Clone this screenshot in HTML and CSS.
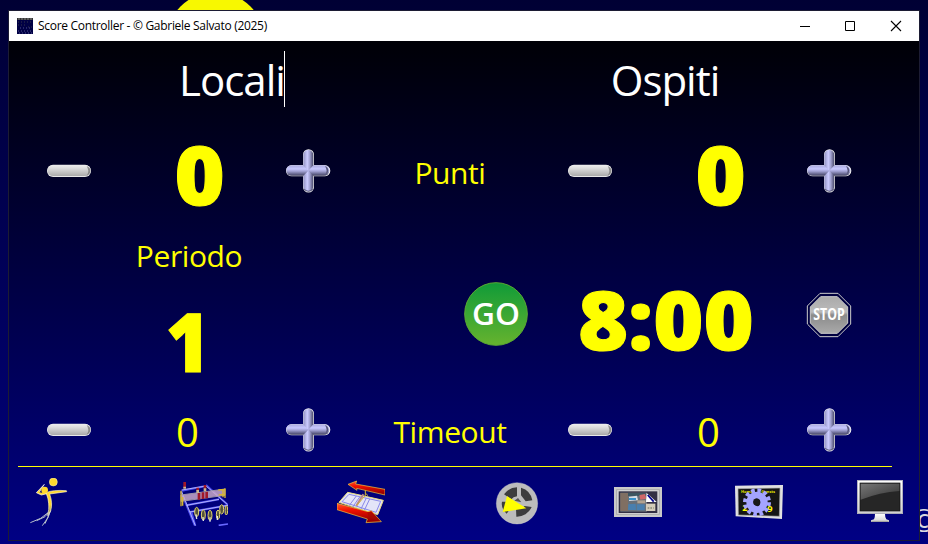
FILE: index.html
```html
<!DOCTYPE html>
<html lang="it">
<head>
<meta charset="utf-8">
<title>Score Controller</title>
<link rel="stylesheet" href="styles.css">
</head>
<body>
<svg class="defs" width="0" height="0" aria-hidden="true">
  <defs>
    <linearGradient id="gm" x1="0" y1="0" x2="0" y2="1"><stop offset="0" stop-color="#eee"/><stop offset=".3" stop-color="#ddd"/><stop offset=".65" stop-color="#c4c4c4"/><stop offset="1" stop-color="#aaa"/></linearGradient>
    <linearGradient id="gh" x1="0" y1="0" x2="0" y2="1"><stop offset="0" stop-color="#aaaade"/><stop offset=".35" stop-color="#c8c8ff"/><stop offset=".6" stop-color="#9c9ccc"/><stop offset="1" stop-color="#404060"/></linearGradient>
    <linearGradient id="gv" x1="0" y1="0" x2="1" y2="0"><stop offset="0" stop-color="#9090c0"/><stop offset=".4" stop-color="#ccccff"/><stop offset=".65" stop-color="#a0a0d0"/><stop offset="1" stop-color="#484868"/></linearGradient>
    <linearGradient id="gg" x1="0" y1="0" x2="0" y2="1"><stop offset="0" stop-color="#109b38"/><stop offset="1" stop-color="#66b32e"/></linearGradient>
    <linearGradient id="gs" x1="0" y1="0" x2="0" y2="1"><stop offset="0" stop-color="#aaa"/><stop offset=".42" stop-color="#bbb"/><stop offset=".5" stop-color="#8b8b8b"/><stop offset="1" stop-color="#aaa"/></linearGradient>
    <linearGradient id="gb" x1="0" y1="0" x2="0" y2="1"><stop offset="0" stop-color="#fff"/><stop offset="1" stop-color="#d0d0d0"/></linearGradient>
    <linearGradient id="gk" x1="0" y1="0" x2="1" y2="1"><stop offset="0" stop-color="#777"/><stop offset="1" stop-color="#333"/></linearGradient>
    <linearGradient id="gr" x1="0" y1="0" x2="0.2" y2="1"><stop offset="0" stop-color="#ff5a30"/><stop offset=".4" stop-color="#f01000"/><stop offset="1" stop-color="#900"/></linearGradient>
    <linearGradient id="gl" x1="0" y1="0" x2="0" y2="1"><stop offset="0" stop-color="#ffd92e"/><stop offset=".55" stop-color="#ffd92e"/><stop offset="1" stop-color="#777b70"/></linearGradient>
    <symbol id="minus" viewBox="45 51 144 144">
      <rect x="51" y="104" width="132" height="37" rx="18" fill="#e8e8e8"/>
      <rect x="53" y="105" width="129" height="33" rx="16.500" fill="url(#gm)"/>
      <path d="M170 108q12 5 11 15q-1 10-11 14q6-8 5-15t-5-14z" fill="#666" opacity=".65"/>
    </symbol>
    <symbol id="plus" viewBox="762 51 144 144">
      <path d="M835 52v8M819 74a16 16 0 0 1 33 0v31h32a17 17 0 0 1 0 34h-32v32a16 16 0 0 1-33 0v-32h-34a17 17 0 0 1 0-34h34z" fill="#eee"/>
      <rect x="769" y="106" width="129" height="31" rx="15.500" fill="url(#gh)"/>
      <path d="M820 75a15 15 0 0 1 30 0v31l-15 16-15-16zM820 137l15-15 15 15v32a15 15 0 0 1-30 0z" fill="url(#gv)"/>
      <path d="M885 108q11 5 10 14t-10 13q5-7 5-13t-5-14zM823 176q12 12 24 0l2 3q-13 12-27 0z" fill="#555578"/>
    </symbol>
  </defs>
</svg>
<div class="desktop">
  <div class="ball"></div>
  <div class="mark">©</div>
  <main class="window">
    <header class="titlebar">
      <svg class="app" viewBox="0 0 16 16"><rect width="16" height="16" fill="#000044"/><path d="M0 0h16v2H0z" fill="#333"/><path d="M1 1h14" stroke="#999" stroke-width=".8" stroke-dasharray="2 1"/><path d="M1 4h14M1 7h9M11 9h4" stroke="#4a4a4a" stroke-width=".7" stroke-dasharray="1 2"/><path d="M1 13h14M2 15h13M3 10h10" stroke="#6262a4" stroke-width=".8" stroke-dasharray="1 2"/></svg>
      <span class="title">Score Controller - © Gabriele Salvato (2025)</span>
      <svg class="controls" viewBox="0 0 104 12"><path d="M1 6.500h10M46.500 1.500h9v9h-9z" fill="none" stroke="#000"/><path d="M92 1l10 10M102 1L92 11" stroke="#000" stroke-width="1.100"/></svg>
    </header>
    <section class="row names">
      <div class="name home"><span>Locali</span><i class="caret"></i></div>
      <div class="name away">Ospiti</div>
    </section>
    <section class="row points">
      <svg class="btn first"><use href="#minus"/></svg>
      <b class="big">0</b>
      <svg class="btn"><use href="#plus"/></svg>
      <span class="label">Punti</span>
      <svg class="btn"><use href="#minus"/></svg>
      <b class="big">0</b>
      <svg class="btn"><use href="#plus"/></svg>
    </section>
    <section class="middle">
      <div class="period"><span class="label">Periodo</span><b class="big one">1</b></div>
      <svg class="go" viewBox="42 36 192 192"><circle cx="138" cy="132" r="94" fill="url(#gg)" stroke="#5aa832" stroke-width="3"/><text x="138" y="165" text-anchor="middle" textLength="144" lengthAdjust="spacingAndGlyphs">GO</text></svg>
      <b class="big clock">8:00</b>
      <svg class="stop" viewBox="1068 66 138 138"><path d="M1110 70h54l38 38v54l-38 38h-54l-38-38v-54z" fill="#000040" stroke="#ccc" stroke-width="3"/><path d="M1112 80h50l31 31v48l-31 31h-50l-31-31v-48z" fill="url(#gs)" stroke="#ccc" stroke-width="3"/><text x="1137" y="150" text-anchor="middle" textLength="94" lengthAdjust="spacingAndGlyphs">STOP</text></svg>
    </section>
    <section class="row timeouts">
      <svg class="btn first"><use href="#minus"/></svg>
      <span class="count">0</span>
      <svg class="btn"><use href="#plus"/></svg>
      <span class="label">Timeout</span>
      <svg class="btn"><use href="#minus"/></svg>
      <span class="count">0</span>
      <svg class="btn"><use href="#plus"/></svg>
    </section>
    <hr class="rule">
    <nav class="toolbar">
      <svg class="tool" viewBox="75 39 144 144">
        <path d="M152 135L144 158 127 182M148 140L122 160 91 173M152 135L135 155 110 167M152 137L135 176" fill="none" stroke="#b8c0cc" stroke-width="3"/>
        <path d="M133 58L109 83 124 90 141 86 130 78 119 80z" fill="#ffd92e" stroke="#fff" stroke-width="2"/><path d="M118 82l8-8 1 9z" fill="#000078"/>
        <path d="M138 83Q159 74 199 77L200 80 149 87Q159 115 152 137Q147 144 143 152Q152 115 138 83z" fill="url(#gl)" stroke="#fff6c8" stroke-width="2"/>
        <circle cx="160" cy="51" r="12" fill="#ffd92e" stroke="#fff4b0" stroke-width="1.500"/><circle cx="134" cy="75" r="10" fill="#ffd92e"/>
      </svg>
      <svg class="tool" viewBox="540 39 144 144">
        <path d="M545 77L618 63M574 140L586 182M543 80L584 180M618 60L684 120M559 121L657 103M570 141L684 121" fill="none" stroke="#4c4cf0" stroke-width="6"/>
        <path d="M545 75L618 63 682 118M545 80L586 182M559 121L657 103M570 141L684 121" fill="none" stroke="#e4e4ff" stroke-width="2"/>
        <path d="M656 181L684 177" stroke="#6868ff" stroke-width="5"/>
        <path d="M543 90L675 72V91L543 109z" fill="#c8a8c8" fill-opacity=".85" stroke="#9c94a8" stroke-width="3"/>
        <path d="M543 77v47M548 96v26M675 70v29M669 74v23M655 75l20-2M656 90l19-2" stroke="#d8b830" stroke-width="4"/>
        <g stroke-width="8"><path d="M554 51v18M593 68v10M615 60v11M597 84v20M609 82v20M620 80v20" stroke="#a01828"/><path d="M554 65v6M593 75v9M615 70v9" stroke="#c8b890"/></g>
        <g fill="#55523a" stroke="#e0d470" stroke-width="3"><ellipse cx="590" cy="141" rx="6" ry="14"/><ellipse cx="610" cy="150" rx="6" ry="15"/><ellipse cx="630" cy="151" rx="6" ry="15"/><ellipse cx="654" cy="149" rx="5" ry="14"/><ellipse cx="665" cy="133" rx="6" ry="14"/><ellipse cx="679" cy="136" rx="4" ry="14"/></g>
        <path d="M588 148l2 14M609 156l1 12M630 157v13M652 153v12" stroke="#e8e8e0" stroke-width="4"/>
      </svg>
      <svg class="tool" viewBox="51 39 144 144">
        <path d="M83 82L190 106 173 149 57 112z" fill="#e4e4f8" stroke="#e8dc80" stroke-width="3"/>
        <path d="M87 88L182 109 168 142 66 110zM109 93L88 121M119 96L98 126M139 99L123 132M149 102L133 136" fill="none" stroke="#8888e8" stroke-width="3"/>
        <path d="M130 88L109 122" stroke="#b88888" stroke-width="6"/><path d="M136 74v17L110 122M136 84l8 8" stroke="#d4b830" stroke-width="3" fill="none"/>
        <path d="M84 58L110 48 107 57 195 73V90L110 70 111 76z" fill="url(#gr)" stroke="#f0d040" stroke-width="2"/>
        <path d="M51 115L144 140 154 137 184 170 138 173 142 162 51 134z" fill="url(#gr)" stroke="#f0d040" stroke-width="2"/><path d="M142 142l12-2 28 28-35-8z" fill="#a00c00" opacity=".65"/>
      </svg>
      <svg class="tool" viewBox="519 39 144 144">
        <circle cx="591" cy="115" r="62" fill="#bcbcbc" stroke="#ddd" stroke-width="1"/>
        <path d="M591 67A48 48 0 0 0 552 88L574 103Q579 96 591 94zM603 68A48 48 0 0 1 637 106L617 109 603 91zM546 110Q542 130 560 146L574 126Q566 119 567 110zM588 131L589 155A48 48 0 0 0 635 126L614 123Q603 134 588 131z" fill="#3d3d3d"/>
        <path d="M583 107l11-8 10 13z" fill="#555"/><path d="M561 93L619 130 548 141z" fill="#ff0"/>
      </svg>
      <svg class="tool" viewBox="42 39 144 144">
        <rect x="42" y="66" width="144" height="90" fill="#c9c9c9"/><rect x="50" y="74" width="128" height="74" fill="#d8d8d8" stroke="#aaa" stroke-width="3"/><rect x="56" y="79" width="116" height="65" fill="#333044"/>
        <path d="M61 83h80v57H61z" fill="#687078"/><path d="M61 84h23v54H61z" fill="#806f62"/><path d="M84 84h53v9H84z" fill="#3d5560"/>
        <path d="M87 95l24-3 3 14-27 2z" fill="#d5dde6"/><path d="M87 99h21v6H87z" fill="#3a91cb"/><path d="M118 90l17-3 4 14-18 3z" fill="#cf6868"/><path d="M85 118l22-2 1 19H84zM110 118h24v18h-24z" fill="#497fae"/><path d="M138 116h28v22h-28z" fill="#d4ccba"/><path d="M143 129h18" stroke="#887" stroke-width="4" stroke-dasharray="5 3"/><path d="M112 106h24v9h-24z" fill="#b1a290"/>
        <path d="M140 84L170 111H138z" fill="#fff"/><path d="M143 90l18 20" stroke="#000090" stroke-width="5"/>
      </svg>
      <svg class="tool" viewBox="405 39 144 144">
        <path d="M405 62L549 60 546 162 407 154z" fill="#e1e1e1"/><path d="M414 71L540 69 538 154 415 150z" fill="#151515" stroke="#aaa" stroke-width="2"/>
        <text class="tiny" x="423" y="84">Home</text><text class="tiny" x="484" y="84">Guests</text><text class="digits" x="427" y="139">2</text><text class="digits" x="502" y="142">9</text>
        <circle cx="471" cy="112" r="33" fill="none" stroke="#a4a4ff" stroke-width="18" stroke-dasharray="10 7.279"/><circle cx="471" cy="112" r="21" fill="none" stroke="#a4a4ff" stroke-width="22"/><path d="M463 103q9-7 16 2 4 12-3 18-9 2-15-5-4-9 2-15z" fill="#181818"/>
      </svg>
      <svg class="tool" viewBox="228 234 144 144">
        <path d="M285 341h30q0 13 4 17l8 3v5h-54v-5l9-3q3-4 3-17z" fill="url(#gb)"/><path d="M274 364h52" stroke="#999" stroke-width="3"/>
        <rect x="232" y="241" width="136" height="100" fill="url(#gb)" stroke="#bbb" stroke-width="2"/><rect x="240" y="249" width="120" height="84" fill="#262626" stroke="#111" stroke-width="2"/><path d="M242 251h116v22Q300 277 242 299z" fill="url(#gk)"/>
      </svg>
    </nav>
  </main>
</div>
</body>
</html>
```
FILE: styles.css
```css
* { box-sizing: border-box; }
body { margin: 0; font-family: "Open Sans", "Noto Sans", sans-serif; }
.defs { position: absolute; }
.desktop {
  position: relative; width: 928px; height: 544px; overflow: hidden;
  padding: 10px 8px 3px; background: linear-gradient(#000034, #00005c 55%, #000080);
}
.ball { position: absolute; left: 166px; top: -8px; width: 99px; height: 99px; border-radius: 50%; background: #f8f800; }
.mark { position: absolute; left: 911px; top: 499px; font-size: 31px; line-height: 42px; color: #d8d8e0; }
.window {
  position: relative; width: 912px; height: 531px; border: 1px solid #1c1c34;
  background: linear-gradient(#000006 30px, #000084); color: #ff0;
  display: flex; flex-direction: column;
}
.titlebar { height: 30px; background: #fff; color: #000; display: flex; align-items: center; padding: 0 16px 1px 8px; flex: none; }
.app { width: 16px; height: 16px; margin-right: 5px; }
.title { font-size: 12px; letter-spacing: -0.3px; flex: 1; white-space: nowrap; }
.controls { width: 104px; height: 12px; }
.row { display: grid; grid-template-columns: 142px 96px 122px 162px 118px 142px 76px; align-items: center; justify-items: center; flex: none; }
.names { height: 79px; grid-template-columns: 446px 420px; padding-bottom: 3px; }
.name { color: #fff; font-size: 42px; line-height: 57px; letter-spacing: -1px; display: flex; }
.home { height: 56px; }
.home span { margin-right: -1px; }
.caret { width: 1px; height: 56px; background: #fff; }
.points { height: 102px; }
.btn { width: 48px; height: 48px; }
.first { margin-right: 22px; }
.big { font-size: 81px; line-height: 90px; font-weight: 800; transform: scaleX(1.06); -webkit-text-stroke: 1px #ff0; }
.points .big { margin: 6px 0 0 1px; }
.label { font-size: 30px; line-height: 42px; letter-spacing: -0.4px; }
.points .label, .timeouts .label { margin-top: 4px; }
.middle {
  height: 172px; display: grid; grid-template-columns: 423px 127px 214px 112px;
  align-items: center; justify-items: center; flex: none; padding-top: 13px;
}
.period { display: flex; flex-direction: column; align-items: center; gap: 19px; align-self: start; margin-right: 63px; }
.one { margin-right: 2px; transform: scaleX(.93); }
.go { width: 64px; height: 64px; margin-bottom: 2px; }
.clock { margin-top: 9px; }
.stop { width: 46px; height: 46px; }
.go text { font: 600 92px "Open Sans", sans-serif; fill: #fff; }
.stop text { font: 700 50px "Open Sans", sans-serif; fill: #fff; }
.timeouts { height: 72px; }
.count { font-size: 40px; line-height: 56px; margin: 4px 23px 0 0; }
.rule { width: 874px; height: 1px; margin: 0 0 0 9px; border: 0; background: #ff0; flex: none; }
.toolbar { height: 73px; display: grid; grid-template-columns: 155px 157px 156px 121px 121px 121px 48px; padding: 11px 0 0 16px; }
.tool { width: 48px; height: 48px; }
.tiny { font: 700 12px "Open Sans", sans-serif; fill: #e6e600; }
.digits { font: 700 28px "Open Sans", sans-serif; fill: #ff0; }
```
